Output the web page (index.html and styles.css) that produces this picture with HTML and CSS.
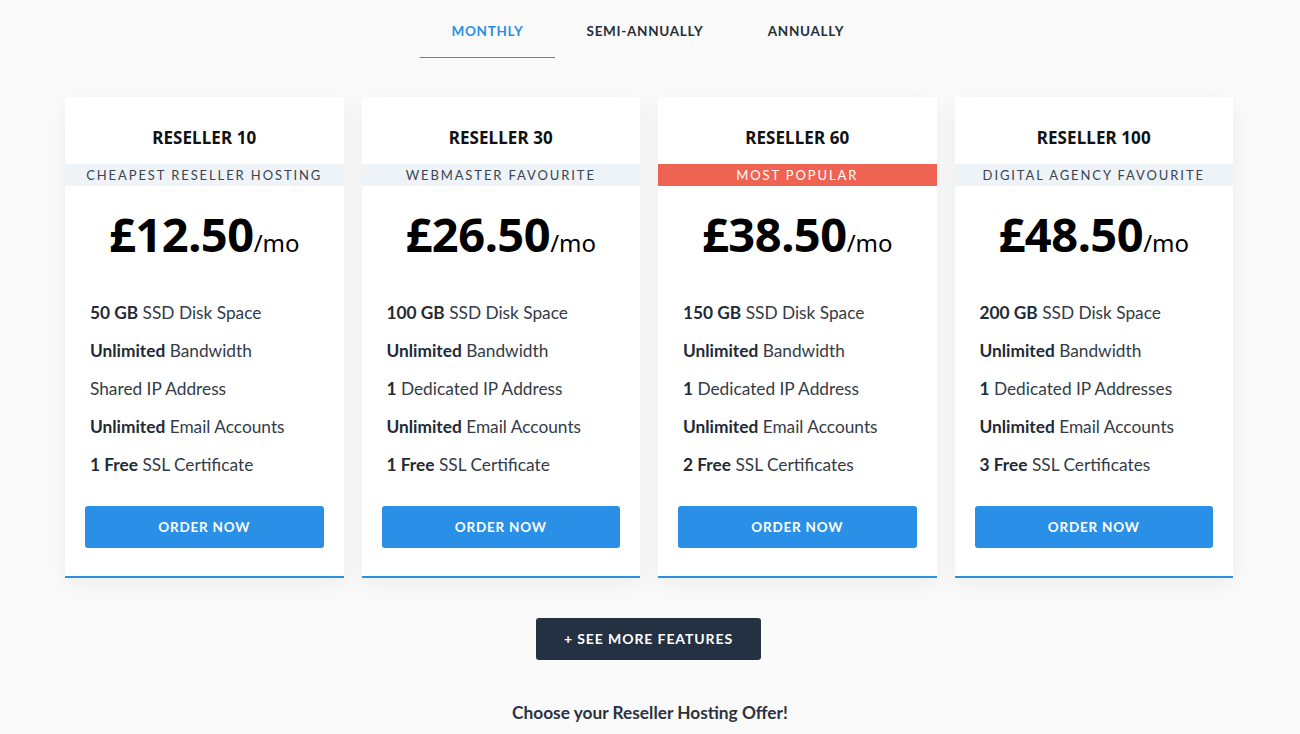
FILE: index.html
```html
<!DOCTYPE html>
<html>
<head>
<meta charset="utf-8">
<link rel="stylesheet" href="styles.css">
</head>
<body>
<div class="page">
  <nav class="tabs">
    <a class="tab active">MONTHLY</a>
    <a class="tab semi">SEMI-ANNUALLY</a>
    <a class="tab annual">ANNUALLY</a>
  </nav>

  <div class="plans">
    <div class="card">
      <h3 class="name">RESELLER 10</h3>
      <div class="tag">CHEAPEST RESELLER HOSTING</div>
      <div class="price"><span class="amount">£12.50</span><span class="per">/mo</span></div>
      <ul class="features">
        <li><b>50 GB</b> SSD Disk Space</li>
        <li><b>Unlimited</b> Bandwidth</li>
        <li>Shared IP Address</li>
        <li><b>Unlimited</b> Email Accounts</li>
        <li><b>1 Free</b> SSL Certificate</li>
      </ul>
      <a class="order">ORDER NOW</a>
    </div>
    <div class="card">
      <h3 class="name">RESELLER 30</h3>
      <div class="tag">WEBMASTER FAVOURITE</div>
      <div class="price"><span class="amount">£26.50</span><span class="per">/mo</span></div>
      <ul class="features">
        <li><b>100 GB</b> SSD Disk Space</li>
        <li><b>Unlimited</b> Bandwidth</li>
        <li><b>1</b> Dedicated IP Address</li>
        <li><b>Unlimited</b> Email Accounts</li>
        <li><b>1 Free</b> SSL Certificate</li>
      </ul>
      <a class="order">ORDER NOW</a>
    </div>
    <div class="card">
      <h3 class="name">RESELLER 60</h3>
      <div class="tag popular">MOST POPULAR</div>
      <div class="price"><span class="amount">£38.50</span><span class="per">/mo</span></div>
      <ul class="features">
        <li><b>150 GB</b> SSD Disk Space</li>
        <li><b>Unlimited</b> Bandwidth</li>
        <li><b>1</b> Dedicated IP Address</li>
        <li><b>Unlimited</b> Email Accounts</li>
        <li><b>2 Free</b> SSL Certificates</li>
      </ul>
      <a class="order">ORDER NOW</a>
    </div>
    <div class="card">
      <h3 class="name">RESELLER 100</h3>
      <div class="tag">DIGITAL AGENCY FAVOURITE</div>
      <div class="price"><span class="amount">£48.50</span><span class="per">/mo</span></div>
      <ul class="features">
        <li><b>200 GB</b> SSD Disk Space</li>
        <li><b>Unlimited</b> Bandwidth</li>
        <li><b>1</b> Dedicated IP Addresses</li>
        <li><b>Unlimited</b> Email Accounts</li>
        <li><b>3 Free</b> SSL Certificates</li>
      </ul>
      <a class="order">ORDER NOW</a>
    </div>
  </div>

  <div class="more-wrap">
    <a class="more">+ SEE MORE FEATURES</a>
  </div>
  <p class="choose">Choose your Reseller Hosting Offer!</p>
</div>
</body>
</html>
```

FILE: styles.css
```css
* { box-sizing: border-box; }
html, body {
  margin: 0;
  padding: 0;
  background: #fafafa;
  font-family: "Lato", "Open Sans", sans-serif;
  color: #2b3340;
}
.page {
  width: 1300px;
  height: 734px;
  overflow: hidden;
}
.tabs {
  display: flex;
  justify-content: flex-start;
  padding-left: 420px;
  padding-top: 22px;
  height: 58px;
}
.tab {
  display: block;
  width: 135px;
  text-align: center;
  font-family: "Lato", sans-serif;
  font-weight: 700;
  font-size: 13.5px;
  letter-spacing: 0.7px;
  color: #262f3a;
  line-height: 18px;
  height: 36px;
}
.tab.semi { width: 180px; }
.tab.annual { width: 142px; }
.tab.active {
  color: #2a8fe6;
  border-bottom: 1px solid #2a8fe6;
}
.plans {
  display: flex;
  gap: 18px;
  margin: 39px 0 0 65px;
  width: 1168px;
}
.card {
  flex: 1;
  background: #fff;
  border-bottom: 2px solid #2a8fe6;
  box-shadow: 0 6px 20px rgba(0,0,0,0.06);
  display: flex;
  flex-direction: column;
  align-items: stretch;
  height: 481px;
}
.name {
  margin: 0;
  padding-top: 29px;
  height: 67px;
  text-align: center;
  font-family: "Noto Sans", sans-serif;
  font-weight: 700;
  font-size: 17px;
  letter-spacing: 0.1px;
  color: #111;
  line-height: 24px;
}
.tag {
  background: #eef3f8;
  height: 22px;
  line-height: 23px;
  text-align: center;
  font-size: 13px;
  letter-spacing: 1.9px;
  color: #3a4452;
}
.tag.popular {
  background: #ef6352;
  color: #fff;
}
.price {
  text-align: center;
  height: 108px;
  padding-top: 18px;
  font-family: "Noto Sans", sans-serif;
  color: #000;
}
.amount {
  font-weight: 700;
  font-size: 47px;
  line-height: 60px;
  letter-spacing: -0.5px;
}
.per {
  font-size: 24px;
  font-weight: 400;
}
.features {
  list-style: none;
  margin: 0;
  padding: 0 25px;
  font-size: 17.3px;
  color: #333b48;
}
.features li {
  height: 38px;
  line-height: 38px;
}
.features b { font-weight: 700; color: #222a36; }
.order {
  display: block;
  margin: 22px 20px 0;
  height: 42px;
  line-height: 42px;
  background: #2a8fe6;
  border-radius: 3px;
  color: #fff;
  text-align: center;
  font-weight: 700;
  font-size: 13.5px;
  letter-spacing: 0.8px;
}
.more-wrap {
  display: flex;
  justify-content: center;
  margin-top: 40px;
}
.more {
  display: block;
  width: 225px;
  height: 42px;
  line-height: 42px;
  margin-left: -3px;
  background: #243142;
  border-radius: 3px;
  color: #fff;
  text-align: center;
  font-weight: 700;
  font-size: 14px;
  letter-spacing: 0.9px;
}
.choose {
  margin: 42px 0 0;
  text-align: center;
  font-size: 17.3px;
  font-weight: 700;
  color: #2b3340;
}
```
